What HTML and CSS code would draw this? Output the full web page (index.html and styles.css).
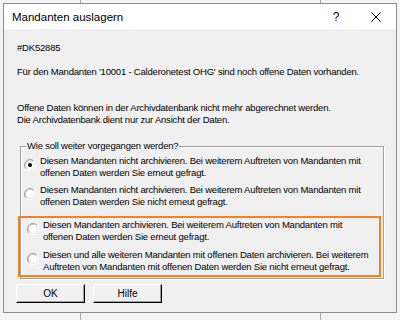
FILE: index.html
```html
<!DOCTYPE html>
<html lang="de">
<head>
<meta charset="utf-8">
<title>Mandanten auslagern</title>
<link rel="stylesheet" href="styles.css">
</head>
<body>
<svg class="defs" width="0" height="0" aria-hidden="true">
  <defs>
    <symbol id="radio" viewBox="0 0 12 12">
      <circle cx="6" cy="6" r="5" fill="#fff"/>
      <path d="M2.11 9.89A5.5 5.5 0 0 1 9.89 2.11" fill="none" stroke="#a0a0a0"/>
      <path d="M9.89 2.11A5.5 5.5 0 0 1 2.11 9.89" fill="none" stroke="#ffffff"/>
      <path d="M2.82 9.18A4.5 4.5 0 0 1 9.18 2.82" fill="none" stroke="#c8c8c8"/>
      <path d="M9.18 2.82A4.5 4.5 0 0 1 2.82 9.18" fill="none" stroke="#e8e8e8"/>
    </symbol>
  </defs>
</svg>
<div class="dialog">
  <div class="titlebar">
    <span class="title">Mandanten auslagern</span>
    <span class="tb-btn help">?</span>
    <span class="tb-btn close">
      <svg width="10" height="10" viewBox="0 0 10 10"><path d="M0.5 0.5L9.5 9.5M9.5 0.5L0.5 9.5" stroke="#000" stroke-width="1"/></svg>
    </span>
  </div>
  <div class="content">
    <p class="id">#DK52885</p>
    <p class="msg">Für den Mandanten '10001 - Calderonetest OHG' sind noch offene Daten vorhanden.</p>
    <p class="info">Offene Daten können in der Archivdatenbank nicht mehr abgerechnet werden.<br>Die Archivdatenbank dient nur zur Ansicht der Daten.</p>
    <fieldset class="group">
      <legend>Wie soll weiter vorgegangen werden?</legend>
      <div class="option">
        <svg class="radio" width="12" height="12"><use href="#radio"/><circle cx="6" cy="6" r="2" fill="#000"/></svg>
        <span>Diesen Mandanten nicht archivieren. Bei weiterem Auftreten von Mandanten mit<br>offenen Daten werden Sie erneut gefragt.</span>
      </div>
      <div class="option">
        <svg class="radio" width="12" height="12"><use href="#radio"/></svg>
        <span>Diesen Mandanten nicht archivieren. Bei weiterem Auftreten von Mandanten mit<br>offenen Daten werden Sie nicht erneut gefragt.</span>
      </div>
      <div class="highlight">
        <div class="option">
          <svg class="radio" width="12" height="12"><use href="#radio"/></svg>
          <span>Diesen Mandanten archivieren. Bei weiterem Auftreten von Mandanten mit<br>offenen Daten werden Sie erneut gefragt.</span>
        </div>
        <div class="option">
          <svg class="radio" width="12" height="12"><use href="#radio"/></svg>
          <span>Diesen und alle weiteren Mandanten mit offenen Daten archivieren. Bei weiterem<br>Auftreten von Mandanten mit offenen Daten werden Sie nicht erneut gefragt.</span>
        </div>
      </div>
    </fieldset>
    <div class="buttons">
      <button class="btn">OK</button>
      <button class="btn">Hilfe</button>
    </div>
  </div>
</div>
</body>
</html>
```
FILE: styles.css
```css
html, body {
  margin: 0;
  padding: 0;
}
body {
  width: 400px;
  height: 320px;
  overflow: hidden;
  background-color: #f4f4f4;
  background-image:
    linear-gradient(to right, transparent 80px, #a8a8a8 80px, #a8a8a8 81px, transparent 81px,
      transparent 320px, #a8a8a8 320px, #a8a8a8 321px, transparent 321px);
  font-family: "Liberation Sans", Arial, sans-serif;
  color: #000;
}
.defs {
  position: absolute;
}
.dialog {
  margin: 3px 3px 0 3px;
  width: 392px;
  height: 308px;
  border: 1px solid #8c8c8c;
  background: #f0f0f0;
  display: flex;
  flex-direction: column;
}
.titlebar {
  height: 25px;
  background: #fff;
  display: flex;
  align-items: center;
  padding-left: 8px;
}
.title {
  flex: 1;
  font-family: "Liberation Sans", Arial, sans-serif;
  font-size: 11.5px;
  color: #000;
}
.tb-btn {
  width: 40px;
  height: 25px;
  display: flex;
  align-items: center;
  justify-content: center;
}
.help {
  font-size: 12px;
}
.content {
  padding: 13px 12px 0 13px;
  font-size: 9.5px;
  letter-spacing: -0.2px;
  line-height: 12px;
  white-space: nowrap;
}
p {
  margin: 0;
}
.msg {
  margin-top: 12px;
}
.info {
  margin-top: 24px;
}
.group {
  margin: 14px 0 0 3px;
  padding: 0 0 1px 3px;
  border: 1px solid #a0a0a0;
  box-shadow: inset 1px 1px 0 #fff, 1px 1px 0 #fff;
}
.group legend {
  margin-left: 2px;
  padding: 0 1px;
  line-height: 12px;
}
.option {
  display: flex;
  align-items: flex-start;
  gap: 4px;
  margin-top: 3px;
}
.option + .option {
  margin-top: 5px;
}
.radio {
  flex: none;
  margin-top: 4px;
}
.highlight {
  margin: 8px 2px 0 -6px;
  padding: 0 0 2px 7px;
  border: 2px solid #f5821f;
}
.highlight .option:first-child {
  margin-top: 1px;
}
.highlight .option + .option {
  margin-top: 6px;
}
.buttons {
  display: flex;
  gap: 8px;
  margin: 5px 0 0 -1px;
}
.btn {
  width: 69px;
  height: 19px;
  padding: 0;
  background: #f0f0f0;
  font-family: "Liberation Sans", Arial, sans-serif;
  font-size: 10px;
  color: #000;
  border: 1px solid;
  border-color: #fff #000 #000 #fff;
  box-shadow: inset -1px -1px 0 #a0a0a0;
}
```
